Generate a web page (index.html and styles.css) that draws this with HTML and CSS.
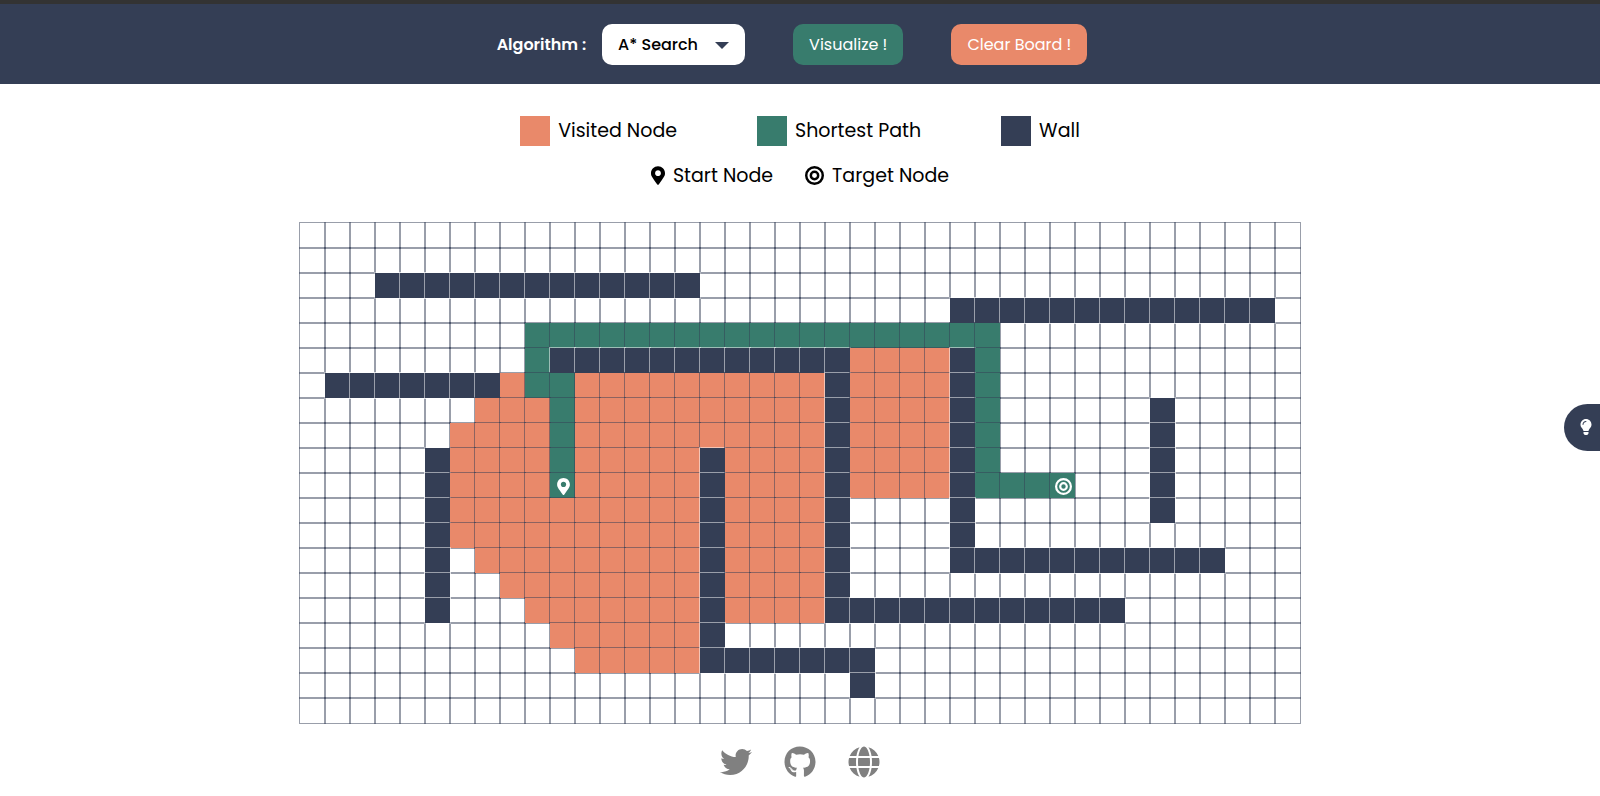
FILE: index.html
```html
<!DOCTYPE html>
<html lang="en">
<head>
<meta charset="utf-8">
<meta name="viewport" content="width=device-width, initial-scale=1">
<title>Pathfinding Visualizer</title>
<link rel="stylesheet" href="styles.css">
</head>
<body>
<svg class="sprite" aria-hidden="true">
  <symbol id="pin" viewBox="0 0 384 512"><path d="M172.268 501.67C26.97 291.031 0 269.413 0 192 0 85.961 85.961 0 192 0s192 85.961 192 192c0 77.413-26.97 99.031-172.268 309.67-9.535 13.774-29.93 13.773-39.464 0zM192 272c44.183 0 80-35.817 80-80s-35.817-80-80-80-80 35.817-80 80 35.817 80 80 80z"/></symbol>
  <symbol id="target" viewBox="0 0 496 496"><g fill="none" stroke="currentColor" stroke-width="64"><circle cx="248" cy="248" r="216"/><circle cx="248" cy="248" r="96"/></g></symbol>
</svg>
<header class="topbar">
  <div class="field">
    <label for="algorithm">Algorithm :</label>
    <div class="picker">
      <select id="algorithm"><option>A* Search</option><option>Dijkstra</option><option>BFS</option><option>DFS</option></select>
      <svg class="caret" viewBox="0 0 14 7" aria-hidden="true"><path d="M0 0h14L7 7z"/></svg>
    </div>
  </div>
  <button class="btn visualize" type="button">Visualize !</button>
  <button class="btn clear" type="button">Clear Board !</button>
</header>
<main>
  <ul class="legend">
    <li><span class="swatch visited"></span>Visited Node</li>
    <li><span class="swatch path"></span>Shortest Path</li>
    <li><span class="swatch wall"></span>Wall</li>
  </ul>
  <ul class="legend markers">
    <li><svg class="pin"><use href="#pin"/></svg>Start Node</li>
    <li><svg class="target"><use href="#target"/></svg>Target Node</li>
  </ul>
  <table class="board" aria-label="Board"><tbody id="board"></tbody></table>
</main>
<button class="hint" type="button" aria-label="Tips"><svg viewBox="0 0 352 512"><path d="M96.06 454.35c.01 6.29 1.87 12.45 5.36 17.69l17.09 25.69a31.99 31.99 0 0 0 26.64 14.28h61.71a31.99 31.99 0 0 0 26.64-14.28l17.09-25.69a31.989 31.989 0 0 0 5.36-17.69l.04-38.35H96.01l.05 38.35zM0 176c0 44.37 16.45 84.85 43.56 115.78 16.52 18.85 42.36 58.23 52.21 91.45.04.26.07.52.11.78h160.24c.04-.26.07-.51.11-.78 9.85-33.22 35.69-72.6 52.21-91.45C335.55 260.85 352 220.37 352 176 352 78.61 272.91-.3 175.45 0 73.44.31 0 82.97 0 176zm176-80c-44.11 0-80 35.89-80 80 0 8.84-7.16 16-16 16s-16-7.16-16-16c0-61.76 50.24-112 112-112 8.84 0 16 7.16 16 16s-7.16 16-16 16z"/></svg></button>
<footer class="social">
  <a href="#twitter" aria-label="Twitter"><svg viewBox="0 0 512 512"><path d="M459.37 151.716c.325 4.548.325 9.097.325 13.645 0 138.72-105.583 298.558-298.558 298.558-59.452 0-114.68-17.219-161.137-47.106 8.447.974 16.568 1.299 25.34 1.299 49.055 0 94.213-16.568 130.274-44.832-46.132-.975-84.792-31.188-98.112-72.772 6.498.974 12.995 1.624 19.818 1.624 9.421 0 18.843-1.3 27.614-3.573-48.081-9.747-84.143-51.98-84.143-102.985v-1.299c13.969 7.797 30.214 12.67 47.431 13.319-28.264-18.843-46.781-51.005-46.781-87.391 0-19.492 5.197-37.36 14.294-52.954 51.655 63.675 129.3 105.258 216.365 109.807-1.624-7.797-2.599-15.918-2.599-24.04 0-57.828 46.782-104.934 104.934-104.934 30.213 0 57.502 12.67 76.67 33.137 23.715-4.548 46.456-13.32 66.599-25.34-7.798 24.366-24.366 44.833-46.132 57.827 21.117-2.273 41.584-8.122 60.426-16.243-14.292 20.791-32.161 39.308-52.628 54.253z"/></svg></a>
  <a href="#github" aria-label="GitHub"><svg viewBox="0 0 496 512"><path d="M165.9 397.4c0 2-2.3 3.6-5.2 3.6-3.3.3-5.6-1.3-5.6-3.6 0-2 2.3-3.6 5.2-3.6 3-.3 5.6 1.3 5.6 3.6zm-31.1-4.5c-.7 2 1.3 4.3 4.3 4.9 2.6 1 5.6 0 6.2-2s-1.3-4.3-4.3-5.2c-2.6-.7-5.5.3-6.2 2.3zm44.2-1.7c-2.9.7-4.9 2.6-4.6 4.9.3 2 2.9 3.3 5.9 2.6 2.9-.7 4.9-2.6 4.6-4.6-.3-1.9-3-3.2-5.9-2.9zM244.8 8C106.1 8 0 113.3 0 252c0 110.9 69.8 205.8 169.5 239.2 12.8 2.3 17.3-5.6 17.3-12.1 0-6.2-.3-40.4-.3-61.4 0 0-70 15-84.7-29.8 0 0-11.4-29.1-27.8-36.6 0 0-22.9-15.7 1.6-15.4 0 0 24.9 2 38.6 25.8 21.9 38.6 58.6 27.5 72.9 20.9 2.3-16 8.8-27.1 16-33.7-55.9-6.2-112.3-14.3-112.3-110.5 0-27.5 7.6-41.3 23.6-58.9-2.6-6.5-11.1-33.3 2.6-67.9 20.9-6.5 69 27 69 27 20-5.6 41.5-8.5 62.8-8.5s42.8 2.9 62.8 8.5c0 0 48.1-33.6 69-27 13.7 34.7 5.2 61.4 2.6 67.9 16 17.7 25.8 31.5 25.8 58.9 0 96.5-58.9 104.2-114.8 110.5 9.2 7.9 17 22.9 17 46.4 0 33.7-.3 75.4-.3 83.6 0 6.5 4.6 14.4 17.3 12.1C428.2 457.8 496 362.9 496 252 496 113.3 383.5 8 244.8 8zM97.2 352.9c-1.3 1-1 3.3.7 5.2 1.6 1.6 3.9 2.3 5.2 1 1.3-1 1-3.3-.7-5.2-1.6-1.6-3.9-2.3-5.2-1zm-10.8-8.1c-.7 1.3.3 2.9 2.3 3.9 1.6 1 3.6.7 4.3-.7.7-1.3-.3-2.9-2.3-3.9-2-.6-3.6-.3-4.3.7zm32.4 35.6c-1.6 1.3-1 4.3 1.3 6.2 2.3 2.3 5.2 2.6 6.5 1 1.3-1.3.7-4.3-1.3-6.2-2.2-2.3-5.2-2.6-6.5-1zm-11.4-14.7c-1.6 1-1.6 3.6 0 5.9 1.6 2.3 4.3 3.3 5.6 2.3 1.6-1.3 1.6-3.9 0-6.2-1.4-2.3-4-3.3-5.6-2z"/></svg></a>
  <a href="#website" aria-label="Website"><svg viewBox="0 0 496 512"><path d="M336.5 160C322 70.7 287.8 8 248 8s-74 62.7-88.5 152h177zM152 256c0 22.2 1.2 43.5 3.3 64h185.3c2.1-20.5 3.3-41.8 3.3-64s-1.2-43.5-3.3-64H155.3c-2.1 20.5-3.3 41.8-3.3 64zm324.7-96c-28.6-67.9-86.5-120.4-158-141.6 24.4 33.8 41.2 84.7 50 141.6h108zM177.2 18.4C105.8 39.6 47.8 92.1 19.3 160h108c8.7-56.9 25.5-107.8 49.9-141.6zM487.4 192H372.7c2.1 21 3.3 42.5 3.3 64s-1.2 43-3.3 64h114.6c5.5-20.5 8.6-41.8 8.6-64s-3.1-43.5-8.5-64zM120 256c0-21.5 1.2-43 3.3-64H8.6C3.2 212.5 0 233.8 0 256s3.2 43.5 8.6 64h114.6c-2-21-3.2-42.5-3.2-64zm39.5 96c14.5 89.3 48.7 152 88.5 152s74-62.7 88.5-152h-177zm159.3 141.6c71.4-21.2 129.4-73.7 158-141.6h-108c-8.8 56.9-25.6 107.8-50 141.6zM19.3 352c28.6 67.9 86.5 120.4 158 141.6-24.4-33.8-41.2-84.7-50-141.6h-108z"/></svg></a>
</footer>
<script src="board.js"></script>
</body>
</html>
```
FILE: styles.css
```css
:root {
  --navy: #343e55;
  --green: #387c6d;
  --orange: #e9896a;
}
* { box-sizing: border-box; }
body {
  margin: 0;
  background: #fff;
  color: #000;
  font-family: Poppins, Inter, sans-serif;
  font-size: 16px;
}
.sprite { position: absolute; width: 0; height: 0; }
svg { display: block; fill: currentColor; }
.topbar {
  display: flex;
  justify-content: center;
  align-items: center;
  gap: 48px;
  padding: 20px 16px 19px 0;
  border-top: 4px solid #333;
  background: var(--navy);
  color: #fff;
}
.field { display: flex; align-items: center; gap: 16px; font-weight: 600; }
.picker { position: relative; }
.picker select {
  appearance: none;
  width: 143px;
  height: 41px;
  padding: 0 16px;
  border: 0;
  border-radius: 10px;
  background: #fff;
  color: #000;
  font: inherit;
  font-weight: 500;
}
.caret {
  position: absolute;
  right: 16px;
  top: 18px;
  width: 14px;
  height: 7px;
  color: var(--navy);
  pointer-events: none;
}
.btn {
  height: 41px;
  padding: 0 16px;
  border: 0;
  border-radius: 10px;
  color: #fff;
  font: inherit;
}
.visualize { background: var(--green); }
.clear { background: var(--orange); }
.legend {
  display: flex;
  justify-content: center;
  gap: 80px;
  margin: 0;
  padding: 32px 0 0;
  list-style: none;
  font-size: 19px;
  line-height: 30px;
}
.legend li { display: flex; align-items: center; gap: 8px; }
.swatch { width: 30px; height: 30px; }
.markers { gap: 32px; padding-top: 15px; }
.legend svg { height: 19px; margin-bottom: 2px; }
.pin { width: 14px; }
.target { width: 19px; }
.board {
  margin: 32px auto 0;
  border-collapse: collapse;
  table-layout: fixed;
  width: 1000px;
}
.board td {
  width: 25px;
  height: 25px;
  padding: 0;
  outline: 1px solid rgba(52, 62, 85, 0.5);
}
.board td.visited, .board td.path, .board td.wall { position: relative; z-index: 0; }
.board td.wall { outline-color: rgba(255, 255, 255, 0.5); }
.board svg { width: 17px; height: 17px; margin: 5px 3px 3px 5px; color: #fff; }
.visited { background: var(--orange); }
.path { background: var(--green); }
.wall { background: var(--navy); }
.hint {
  position: fixed;
  right: 0;
  top: 404px;
  width: 36px;
  height: 47px;
  padding: 0 8px 1px 16px;
  border: 0;
  border-radius: 24px 0 0 24px;
  background: var(--navy);
  color: #fff;
}
.hint svg { width: 12px; height: 16px; }
.social {
  display: flex;
  justify-content: center;
  gap: 32px;
  padding-top: 23px;
  color: #808080;
}
.social a { color: inherit; }
.social svg { width: 32px; height: 32px; }
```
FILE: board.js
```js
const COLUMNS = 40;
const ROWS = 20;
// Runs of cells per row: [kind, first column, last column]
const runs = {
  2: [["wall", 3, 15]],
  3: [["wall", 26, 38]],
  4: [["path", 9, 27]],
  5: [["path", 9, 9], ["wall", 10, 21], ["visited", 22, 25], ["wall", 26, 26], ["path", 27, 27]],
  6: [["wall", 1, 7], ["visited", 8, 8], ["path", 9, 10], ["visited", 11, 20], ["wall", 21, 21], ["visited", 22, 25], ["wall", 26, 26], ["path", 27, 27]],
  7: [["visited", 7, 9], ["path", 10, 10], ["visited", 11, 20], ["wall", 21, 21], ["visited", 22, 25], ["wall", 26, 26], ["path", 27, 27], ["wall", 34, 34]],
  8: [["visited", 6, 9], ["path", 10, 10], ["visited", 11, 20], ["wall", 21, 21], ["visited", 22, 25], ["wall", 26, 26], ["path", 27, 27], ["wall", 34, 34]],
  9: [["wall", 5, 5], ["visited", 6, 9], ["path", 10, 10], ["visited", 11, 15], ["wall", 16, 16], ["visited", 17, 20], ["wall", 21, 21], ["visited", 22, 25], ["wall", 26, 26], ["path", 27, 27], ["wall", 34, 34]],
  10: [["wall", 5, 5], ["visited", 6, 9], ["path", 10, 10], ["visited", 11, 15], ["wall", 16, 16], ["visited", 17, 20], ["wall", 21, 21], ["visited", 22, 25], ["wall", 26, 26], ["path", 27, 30], ["wall", 34, 34]],
  11: [["wall", 5, 5], ["visited", 6, 15], ["wall", 16, 16], ["visited", 17, 20], ["wall", 21, 21], ["wall", 26, 26], ["wall", 34, 34]],
  12: [["wall", 5, 5], ["visited", 6, 15], ["wall", 16, 16], ["visited", 17, 20], ["wall", 21, 21], ["wall", 26, 26]],
  13: [["wall", 5, 5], ["visited", 7, 15], ["wall", 16, 16], ["visited", 17, 20], ["wall", 21, 21], ["wall", 26, 36]],
  14: [["wall", 5, 5], ["visited", 8, 15], ["wall", 16, 16], ["visited", 17, 20], ["wall", 21, 21]],
  15: [["wall", 5, 5], ["visited", 9, 15], ["wall", 16, 16], ["visited", 17, 20], ["wall", 21, 32]],
  16: [["visited", 10, 15], ["wall", 16, 16]],
  17: [["visited", 11, 15], ["wall", 16, 22]],
  18: [["wall", 22, 22]]
};
const markers = { "10-10": "pin", "10-30": "target" };

const board = document.getElementById("board");
for (let r = 0; r < ROWS; r++) {
  const row = board.insertRow();
  for (let c = 0; c < COLUMNS; c++) {
    const cell = row.insertCell();
    const run = (runs[r] || []).find(([, first, last]) => c >= first && c <= last);
    if (run) cell.className = run[0];
    const marker = markers[`${r}-${c}`];
    if (marker) cell.innerHTML = `<svg><use href="#${marker}"/></svg>`;
  }
}
```
